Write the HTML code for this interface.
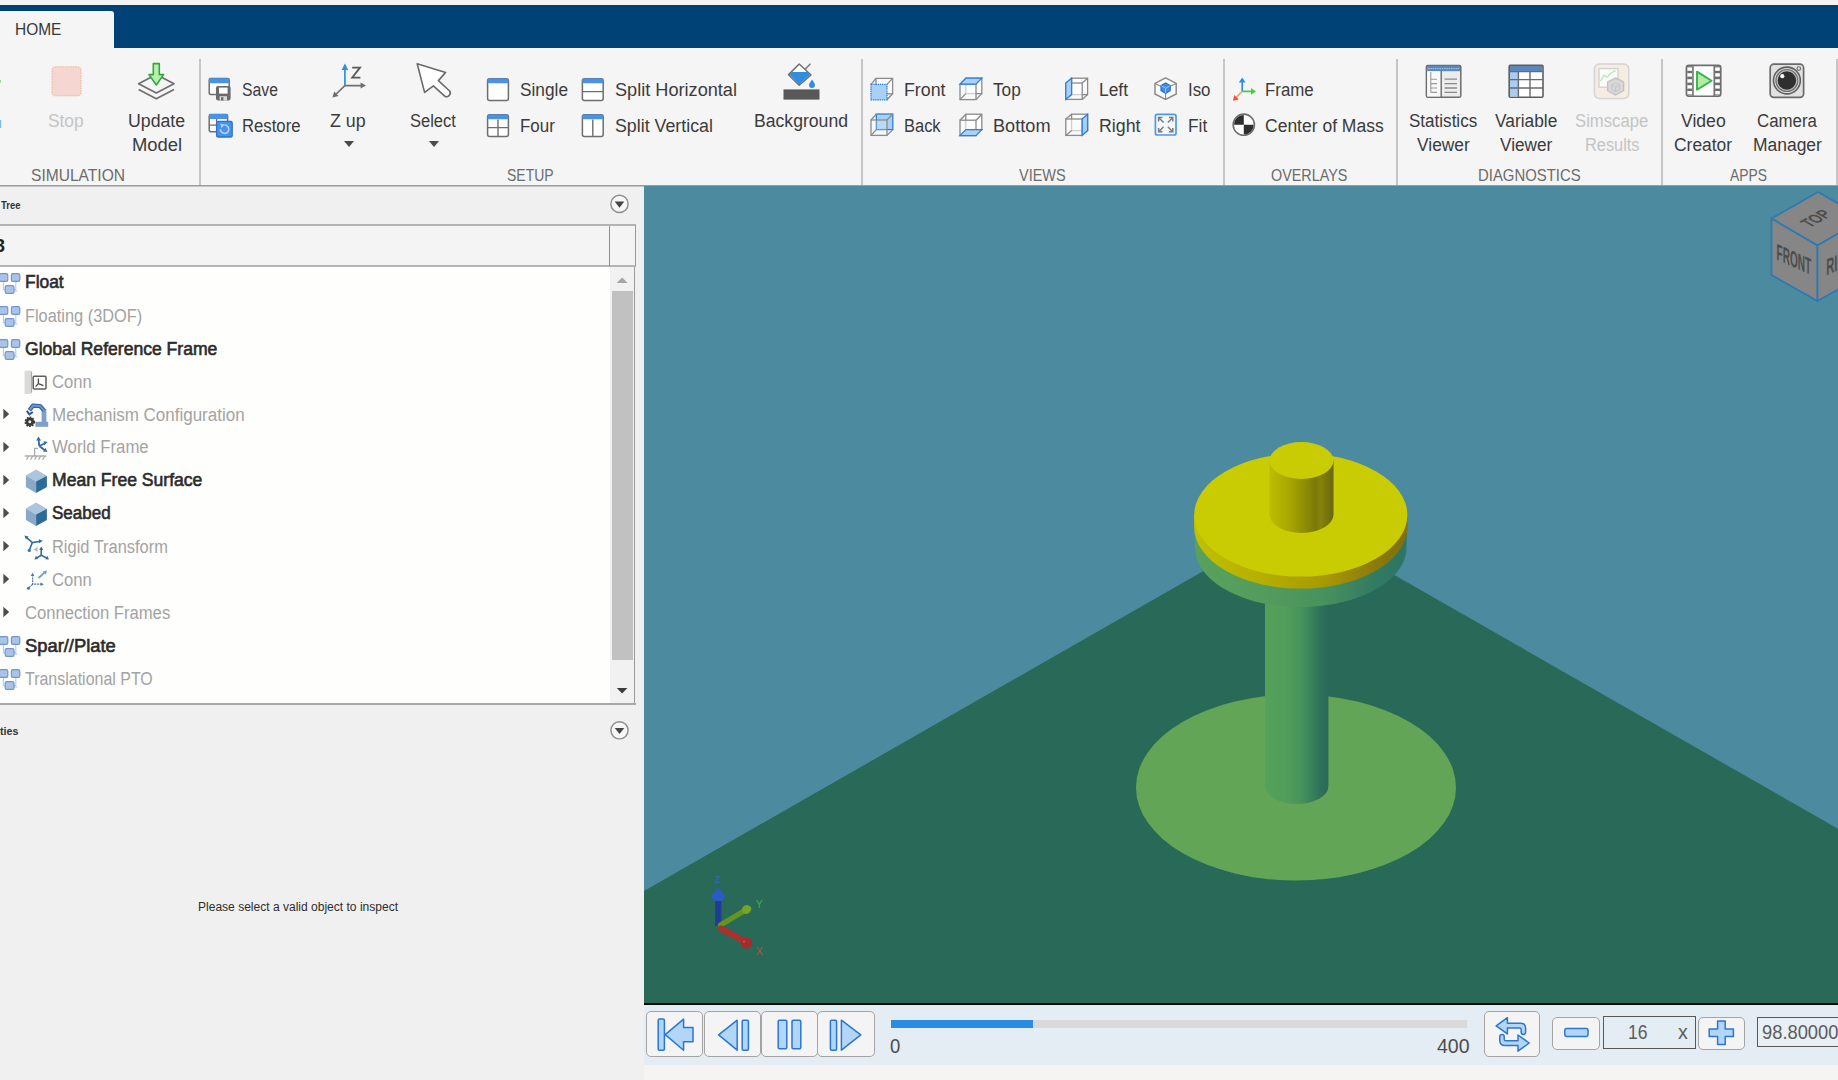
<!DOCTYPE html>
<html>
<head>
<meta charset="utf-8">
<title>Mechanics Explorer</title>
<style>
*{box-sizing:border-box;margin:0;padding:0}
html,body{width:1838px;height:1080px;overflow:hidden;background:#f0f0f0}
body{font-family:"Liberation Sans",sans-serif;position:relative;color:#3a3a3a}
.abs{position:absolute}
/* title / tab strip */
#topstrip{left:0;top:0;width:1838px;height:6px;background:#f3f3f3}
#bluebar{left:0;top:4.8px;width:1838px;height:42.8px;background:#004275}
#hometab{left:0;top:10.7px;width:113.5px;height:38px;background:#f5f5f5;border-radius:0 3px 0 0}
#hometab span{position:absolute;left:14.9px;top:8px;font-size:17px;line-height:22px;color:#383838;transform-origin:0 50%;transform:scaleX(0.9098)}
/* ribbon */
#ribbon{left:0;top:48px;width:1838px;height:137px;background:#f5f5f5}
#rline{left:0;top:185px;width:1838px;height:1px;background:#9c9c9c}
#rline2{left:0;top:186px;width:644px;height:1px;background:#c4c4c4}
.sep{position:absolute;top:59px;width:2px;height:126px;background:#c6c6c6}
.t{position:absolute;font-size:18px;line-height:22px;white-space:nowrap;color:#3b3b3b;transform-origin:0 50%}
.tc{position:absolute;font-size:18px;line-height:22px;white-space:nowrap;color:#3b3b3b;text-align:center;transform-origin:50% 50%}
.dis{color:#c4c4c4}
.sec{position:absolute;font-size:15.5px;line-height:18px;white-space:nowrap;color:#6a6a6a;text-align:center;top:166px;transform-origin:50% 50%}
.ic{position:absolute;overflow:visible}
/* left panel */
#left{left:0;top:187px;width:644px;height:893px;background:#f0f0f0}
#thead{left:-2px;top:224px;width:638px;height:43px;background:#f4f4f4;border:2px solid #b4b4b4;border-right:1px solid #9a9a9a}
#tvdiv{left:609px;top:226px;width:1px;height:40px;background:#8f8f8f}
#tree{left:0;top:267px;width:610px;height:436px;background:#fefefc}
#tscroll{left:610px;top:267px;width:25px;height:436px;background:#f1f1f1;border-right:1px solid #9a9a9a}
#tthumb{left:612px;top:291px;width:21px;height:369px;background:#c1c1c1}
#tbottom{left:0;top:703px;width:636px;height:2px;background:#a9a9a9}
.row{position:absolute;left:0;height:33px;width:610px}
.row .lbl{position:absolute;top:5px;font-size:18px;line-height:22px;white-space:nowrap;transform-origin:0 50%}
.b{font-weight:bold;color:#2a2a2a}
.g{color:#a0a0a0}
.tri{position:absolute;left:3px;width:0;height:0;border-left:6px solid #4d4d4d;border-top:5.5px solid transparent;border-bottom:5.5px solid transparent}
/* viewport */
#view{left:644px;top:186px;width:1194px;height:817px;background:#4b8a9f;overflow:hidden}
#vline{left:644px;top:1002.7px;width:1194px;height:2.6px;background:#050505}
/* playback */
#play{left:644px;top:1005px;width:1194px;height:60px;background:#e3edf3}
#bstrip{left:644px;top:1065px;width:1194px;height:15px;background:#f5f4f3}
.pbtn{position:absolute;background:#f4f4f4;border:1.8px solid #a4a4a4;border-radius:5px}
</style>
</head>
<body>
<div id="topstrip" class="abs"></div>
<div id="bluebar" class="abs"></div>
<div id="hometab" class="abs"><span>HOME</span></div>
<div id="ribbon" class="abs"></div><div id="rline" class="abs"></div><div id="rline2" class="abs"></div>
<!--RIBBON_START-->
<div class="sep" style="left:199px"></div>
<div class="sep" style="left:861px"></div>
<div class="sep" style="left:1222.5px"></div>
<div class="sep" style="left:1395.5px"></div>
<div class="sep" style="left:1660.5px"></div>
<div class="sep" style="left:1835.5px"></div>
<span class="t dis" style="left:48.0px;top:109.7px;font-size:18px;transform:scaleX(0.9614)">Stop</span>
<span class="t " style="left:128.1px;top:109.7px;font-size:18px;transform:scaleX(0.9837)">Update</span>
<span class="t " style="left:131.6px;top:133.9px;font-size:18px;transform:scaleX(1.0239)">Model</span>
<span class="t " style="left:242.0px;top:78.8px;font-size:18px;transform:scaleX(0.8750)">Save</span>
<span class="t " style="left:242.0px;top:114.5px;font-size:18px;transform:scaleX(0.9281)">Restore</span>
<span class="t " style="left:330.0px;top:109.7px;font-size:18px;transform:scaleX(0.9883)">Z up</span>
<span class="t " style="left:410.2px;top:109.7px;font-size:18px;transform:scaleX(0.9174)">Select</span>
<span class="t " style="left:519.5px;top:78.8px;font-size:18px;transform:scaleX(0.9592)">Single</span>
<span class="t " style="left:519.5px;top:114.5px;font-size:18px;transform:scaleX(0.9402)">Four</span>
<span class="t " style="left:614.6px;top:78.8px;font-size:18px;transform:scaleX(1.0077)">Split Horizontal</span>
<span class="t " style="left:614.6px;top:114.5px;font-size:18px;transform:scaleX(0.9883)">Split Vertical</span>
<span class="t " style="left:754.3px;top:109.7px;font-size:18px;transform:scaleX(0.9785)">Background</span>
<span class="t " style="left:903.8px;top:78.8px;font-size:18px;transform:scaleX(0.9877)">Front</span>
<span class="t " style="left:903.8px;top:114.5px;font-size:18px;transform:scaleX(0.9146)">Back</span>
<span class="t " style="left:993.2px;top:78.8px;font-size:18px;transform:scaleX(0.9578)">Top</span>
<span class="t " style="left:993.2px;top:114.5px;font-size:18px;transform:scaleX(1.0083)">Bottom</span>
<span class="t " style="left:1099.0px;top:78.8px;font-size:18px;transform:scaleX(0.9658)">Left</span>
<span class="t " style="left:1099.0px;top:114.5px;font-size:18px;transform:scaleX(0.9875)">Right</span>
<span class="t " style="left:1187.8px;top:78.8px;font-size:18px;transform:scaleX(0.9370)">Iso</span>
<span class="t " style="left:1187.8px;top:114.5px;font-size:18px;transform:scaleX(0.9601)">Fit</span>
<span class="t " style="left:1265.4px;top:78.8px;font-size:18px;transform:scaleX(0.9364)">Frame</span>
<span class="t " style="left:1265.4px;top:114.5px;font-size:18px;transform:scaleX(0.9725)">Center of Mass</span>
<span class="t " style="left:1409.0px;top:109.7px;font-size:18px;transform:scaleX(0.9469)">Statistics</span>
<span class="t " style="left:1416.7px;top:133.9px;font-size:18px;transform:scaleX(0.9653)">Viewer</span>
<span class="t " style="left:1495.0px;top:109.7px;font-size:18px;transform:scaleX(0.9627)">Variable</span>
<span class="t " style="left:1500.0px;top:133.9px;font-size:18px;transform:scaleX(0.9543)">Viewer</span>
<span class="t dis" style="left:1575.4px;top:109.7px;font-size:18px;transform:scaleX(0.9274)">Simscape</span>
<span class="t dis" style="left:1584.8px;top:133.9px;font-size:18px;transform:scaleX(0.9079)">Results</span>
<span class="t " style="left:1680.7px;top:109.7px;font-size:18px;transform:scaleX(0.9778)">Video</span>
<span class="t " style="left:1674.0px;top:133.9px;font-size:18px;transform:scaleX(0.9679)">Creator</span>
<span class="t " style="left:1757.0px;top:109.7px;font-size:18px;transform:scaleX(0.9356)">Camera</span>
<span class="t " style="left:1753.0px;top:133.9px;font-size:18px;transform:scaleX(0.9698)">Manager</span>
<span class="t " style="left:31.3px;top:163.8px;font-size:16.5px;transform:scaleX(0.9436);color:#6b6b6b">SIMULATION</span>
<span class="t " style="left:507.0px;top:163.8px;font-size:16.5px;transform:scaleX(0.8471);color:#6b6b6b">SETUP</span>
<span class="t " style="left:1018.7px;top:163.8px;font-size:16.5px;transform:scaleX(0.8782);color:#6b6b6b">VIEWS</span>
<span class="t " style="left:1271.4px;top:163.8px;font-size:16.5px;transform:scaleX(0.8708);color:#6b6b6b">OVERLAYS</span>
<span class="t " style="left:1477.9px;top:163.8px;font-size:16.5px;transform:scaleX(0.9025);color:#6b6b6b">DIAGNOSTICS</span>
<span class="t " style="left:1730.1px;top:163.8px;font-size:16.5px;transform:scaleX(0.8405);color:#6b6b6b">APPS</span>
<div class="abs" style="left:343.7px;top:141px;width:0;height:0;border-left:5.5px solid transparent;border-right:5.5px solid transparent;border-top:6px solid #4a4a4a"></div>
<div class="abs" style="left:428.7px;top:141px;width:0;height:0;border-left:5.5px solid transparent;border-right:5.5px solid transparent;border-top:6px solid #4a4a4a"></div>
<!--RIBBON_END-->
<!--RICONS_START-->
<svg class="abs" style="left:0;top:47px" width="1838" height="139" viewBox="0 47 1838 139" fill="none">
<!-- clipped run button remnants at far left -->
<rect x="-1" y="80" width="2" height="2.6" fill="#8fda98"/><rect x="-1" y="120" width="2.2" height="8" fill="#7dbcf0"/>
<!-- Stop (disabled) -->
<rect x="52" y="66.8" width="29" height="29" rx="3.2" fill="#f5d6d1" stroke="#eab695" stroke-width="1" stroke-dasharray="1.5 1"/>
<!-- Update Model -->
<g stroke="#6f6f6f" stroke-width="1.7" stroke-linejoin="round">
<path d="M138.6,89.4 L156.3,98.8 L174,89.4"/>
<path d="M156.3,74.4 L174,83.7 L156.3,93 L138.6,83.7 Z" fill="#f5f5f5"/>
</g>
<path d="M153.3,63.6 H159.3 V74.6 H163.6 L156.3,85 L149,74.6 H153.3 Z" fill="#b9efab" stroke="#2eaa3c" stroke-width="1.6" stroke-linejoin="round"/>
<!-- Save -->
<rect x="209.2" y="78.6" width="20" height="16" rx="1.5" fill="#fff" stroke="#6e6e6e" stroke-width="1.5"/>
<rect x="209.2" y="78.2" width="20" height="5" rx="1" fill="#4a92e6"/>
<rect x="216" y="86" width="14.6" height="14.4" rx="1.8" fill="#6b6b6b"/>
<rect x="219" y="87.6" width="8.6" height="6" fill="#fdfdfd"/>
<rect x="219.6" y="96.2" width="7.4" height="4.2" fill="#d8d8d8"/><rect x="221" y="97.2" width="2.4" height="3.2" fill="#6b6b6b"/>
<!-- Restore -->
<rect x="209.2" y="114.4" width="18.4" height="17.4" rx="1.5" fill="#fff" stroke="#6e6e6e" stroke-width="1.5"/>
<rect x="209.2" y="114" width="18.4" height="5" rx="1" fill="#4a92e6"/>
<path d="M209.2,125.2 H227.6 M216.6,119 V131.8" stroke="#6e6e6e" stroke-width="1.3"/>
<rect x="216.6" y="121.4" width="15.6" height="15.6" rx="1.6" fill="#4a92e6" stroke="#2c72cf" stroke-width="1.3"/>
<path d="M220.4,129.2 A4.2,4.2 0 1 0 224.4,125" stroke="#a9d0f7" stroke-width="1.6"/>
<path d="M220.2,123.6 L224.8,124.6 L221.6,128 Z" fill="#a9d0f7"/>
<!-- Z up -->
<path d="M344.9,85.6 V69" stroke="#2e8ee2" stroke-width="1.7"/>
<path d="M344.9,63.4 L348.2,70 H341.6 Z" fill="#2e8ee2"/>
<path d="M344.9,85.6 H362 M344.9,85.6 L335.4,94.8" stroke="#6f6f6f" stroke-width="1.6"/>
<path d="M366,85.6 L360.6,82.6 V88.6 Z M332.4,97.6 L334.2,91.6 L338.6,96 Z" fill="#6f6f6f"/>
<path d="M352.2,67.6 H360 L352.2,77.6 H360.4" stroke="#5a5a5a" stroke-width="1.8" stroke-linejoin="miter"/>
<!-- Select -->
<path d="M417.2,63.8 L445.6,72.4 L438.4,80.6 L449.6,91 Q451.4,93.4 449,95.6 Q446.6,97.8 444.4,95.8 L433.4,85.8 L424.6,92.4 Z" fill="#fff" stroke="#6a6a6a" stroke-width="1.6" stroke-linejoin="round"/>
<!-- layout icons -->
<g stroke="#6e6e6e" stroke-width="1.5">
<rect x="487.6" y="78.8" width="20.8" height="21.6" rx="2" fill="#fff"/>
<rect x="487.6" y="114.8" width="20.8" height="21.6" rx="2" fill="#fff"/>
<rect x="582.4" y="78.8" width="20.8" height="21.6" rx="2" fill="#fff"/>
<rect x="582.4" y="114.8" width="20.8" height="21.6" rx="2" fill="#fff"/>
<path d="M487.6,127.6 H508.4 M498,119.6 V136.4 M582.4,91.6 H603.2 M592.8,119.6 V136.4" stroke-width="1.4"/>
</g>
<g fill="#4a92e6">
<rect x="487.6" y="78.4" width="20.8" height="4.8" rx="1.2"/><rect x="487.6" y="114.4" width="20.8" height="4.8" rx="1.2"/>
<rect x="582.4" y="78.4" width="20.8" height="4.8" rx="1.2"/><rect x="582.4" y="114.4" width="20.8" height="4.8" rx="1.2"/>
</g>
<!-- Background -->
<rect x="783.5" y="89.4" width="36" height="10.2" fill="#585858"/>
<path d="M805,69.6 L810.4,63.8" stroke="#7a7a7a" stroke-width="1.5"/>
<path d="M799.2,64 L811,75 L799.2,85.2 L788.6,74.6 Z" fill="#fff" stroke="#6e6e6e" stroke-width="1.5" stroke-linejoin="round"/>
<path d="M791.8,72 H807.8 L810,75 L799.2,84.4 L789.6,74.6 Z" fill="#2e8ee2"/>
<path d="M812,79.4 C813.6,82 815,83.4 815,85 A3,3 0 0 1 809,85 C809,83.4 810.4,82 812,79.4 Z" fill="#2e8ee2"/>
<!-- view cubes -->
<g stroke="#8a8a8a" stroke-width="1.3">
<!-- Front -->
<rect x="876" y="78.4" width="16.6" height="15.4" fill="#fdfdfd"/><path d="M871,84.4 L876,78.4 M887,84.4 L892.6,78.4 M887,99.8 L892.6,93.8"/>
<rect x="871" y="84.4" width="16" height="15.4" fill="#a9d1f6" stroke="#2f7fd8" stroke-dasharray="1.4 0.8"/>
<!-- Back -->
<rect x="876.4" y="114" width="16.4" height="15.6" fill="#a9d1f6" stroke="#2f7fd8"/>
<rect x="871" y="120" width="16" height="15.4" fill="#fdfdfd" fill-opacity="0.2"/><path d="M871,120 L876.4,114 M887,120 L892.8,114 M887,135.4 L892.8,129.6 M871,135.4 L876.4,129.6"/>
<!-- Top -->
<rect x="965.8" y="78.2" width="16" height="15.4" fill="#fdfdfd"/><rect x="960" y="84.2" width="16" height="15.4" fill="#fdfdfd" fill-opacity="0.6"/>
<path d="M976,99.6 L981.8,93.6 M960,99.6 L965.8,93.6"/>
<path d="M965.8,78.2 H981.8 L976,84.2 H960 Z" fill="#a9d1f6" stroke="#2f7fd8"/>
<!-- Bottom -->
<rect x="965.8" y="114.2" width="16" height="15.4" fill="#fdfdfd"/><rect x="960" y="120.2" width="16" height="15.4" fill="#fdfdfd" fill-opacity="0.6"/>
<path d="M960,120.2 L965.8,114.2 M976,120.2 L981.8,114.2"/>
<path d="M965.8,129.6 H981.8 L976,135.6 H960 Z" fill="#a9d1f6" stroke="#2f7fd8"/>
<!-- Left -->
<rect x="1071.6" y="78.2" width="16" height="16.4" fill="#fdfdfd"/><rect x="1065.8" y="83" width="16.4" height="16.4" fill="#fdfdfd" fill-opacity="0.6"/>
<path d="M1082.2,83 L1087.6,78.2 M1082.2,99.4 L1087.6,94.6"/>
<path d="M1065.8,83 L1071.6,78.2 V94.6 L1065.8,99.4 Z" fill="#a9d1f6" stroke="#2f7fd8"/>
<!-- Right -->
<rect x="1071.6" y="114.2" width="16" height="16.4" fill="#fdfdfd"/><rect x="1065.8" y="119" width="16.4" height="16.4" fill="#fdfdfd" fill-opacity="0.6"/>
<path d="M1065.8,119 L1071.6,114.2 M1065.8,135.4 L1071.6,130.6"/>
<path d="M1082.2,119 L1087.6,114.2 V130.6 L1082.2,135.4 Z" fill="#a9d1f6" stroke="#2f7fd8"/>
<!-- Iso -->
<path d="M1165.6,77.8 L1176.2,83.4 V94 L1165.6,99.4 L1155,94 V83.4 Z" fill="#fdfdfd" stroke-width="1.5"/>
<path d="M1165.6,99.4 V92 M1155,83.4 L1161.2,86.4 M1176.2,83.4 L1170,86.4" stroke-width="1.1"/>
</g>
<path d="M1165.6,83 L1170.2,85.6 V90.6 L1165.6,93.2 L1161,90.6 V85.6 Z" fill="#3f8fe6" stroke="#2a6fd0" stroke-width="1.2"/>
<path d="M1165.6,88.2 V93 M1165.6,88.2 L1161.2,85.8 M1165.6,88.2 L1170,85.8" stroke="#9cc8f5" stroke-width="0.9"/>
<!-- Fit -->
<rect x="1155.4" y="114.4" width="20.6" height="20.6" rx="2" fill="#f4f8fd" stroke="#4a9aea" stroke-width="1.7"/>
<g stroke="#7a7a7a" stroke-width="1.4">
<path d="M1163.6,122.6 L1159,118 M1167.8,122.6 L1172.4,118 M1163.6,126.8 L1159,131.4 M1167.8,126.8 L1172.4,131.4"/>
<path d="M1158.6,121.4 V117.6 H1162.4 M1169,117.6 H1172.8 V121.4 M1158.6,128 V131.8 H1162.4 M1169,131.8 H1172.8 V128" stroke-width="1.5"/>
</g>
<!-- Frame -->
<path d="M1242.2,91.4 V81.6" stroke="#2e8ee2" stroke-width="1.7"/><path d="M1242.2,77.6 L1245.6,82.6 H1238.8 Z" fill="#2e8ee2"/>
<path d="M1242.2,91.4 H1252" stroke="#40d040" stroke-width="1.7"/><path d="M1256,91.4 L1251,88 V94.8 Z" fill="#40d040"/>
<path d="M1242.2,91.4 L1236,97.6" stroke="#e9aa7c" stroke-width="1.9"/><path d="M1233,100.8 L1234.2,95 L1238.8,99.6 Z" fill="#ff4a3c"/>
<!-- Center of Mass -->
<circle cx="1243.8" cy="124.7" r="10.6" fill="#fff" stroke="#6e6e6e" stroke-width="1.6"/>
<path d="M1243.8,124.7 V114.9 A9.8,9.8 0 0 0 1234,124.7 Z M1243.8,124.7 V134.5 A9.8,9.8 0 0 0 1253.6,124.7 Z" fill="#2e2e2e"/>
<!-- Statistics Viewer -->
<rect x="1426.4" y="65.4" width="34.4" height="31.8" rx="1.4" fill="#ececec" stroke="#6c6c6c" stroke-width="1.5"/>
<rect x="1427.2" y="66" width="32.8" height="5.2" fill="#5b88bc"/><path d="M1428,68.6 H1459" stroke="#a8c6e6" stroke-width="1" stroke-dasharray="1.5 0.8"/>
<rect x="1427.2" y="71.4" width="13.6" height="25" fill="#f9f9f9"/>
<path d="M1441.2,71 V97" stroke="#6c6c6c" stroke-width="1.4"/>
<path d="M1430.8,72 V92.6 M1430.8,79.2 H1437 M1430.8,83.6 H1437 M1430.8,88 H1437 M1430.8,92.4 H1437" stroke="#9a9a9a" stroke-width="1.1"/>
<path d="M1444.6,79.2 H1457 M1444.6,83.6 H1457 M1444.6,88 H1457 M1444.6,92.4 H1457" stroke="#8a8a8a" stroke-width="1.3"/>
<!-- Variable Viewer -->
<rect x="1509.2" y="65.4" width="33.8" height="31.8" rx="1" fill="#fff" stroke="#5e5e5e" stroke-width="1.6"/>
<rect x="1510" y="66" width="32.2" height="5.2" fill="#5b88bc"/>
<rect x="1510" y="72" width="8" height="24.4" fill="#a9cdf0"/>
<path d="M1509.2,71.6 H1543 M1509.2,79.6 H1543 M1509.2,88 H1543 M1518.4,71.6 V97 M1530,71.6 V97" stroke="#6a6a6a" stroke-width="1.4"/>
<!-- Simscape Results (disabled) -->
<rect x="1594.4" y="64" width="34.4" height="34.4" rx="5" fill="#f5ece2" stroke="#d4d4d4" stroke-width="1.5"/>
<rect x="1599" y="68.6" width="19" height="18.6" fill="#fbfbfb" stroke="#d0d0d0" stroke-width="1.3"/>
<path d="M1600.4,81 L1604,75.4 L1607.4,77 L1611,73 L1615.6,70.6" stroke="#b4e8b0" stroke-width="1.3"/>
<path d="M1615.6,78 L1623.6,82 V90.6 L1615.6,95 L1607.6,90.6 V82 Z" fill="#d9d9d9" stroke="#c2c2c2" stroke-width="1.4"/>
<path d="M1615.6,83 L1619.6,85.2 V89.4 L1615.6,91.6 L1611.6,89.4 V85.2 Z M1615.6,87.2 V91.6 M1615.6,87.2 L1611.8,85.2 M1615.6,87.2 L1619.4,85.2" stroke="#c4c4c4" stroke-width="1"/>
<!-- Video Creator -->
<rect x="1686.4" y="65.4" width="34.4" height="30.8" rx="2.4" fill="#fff" stroke="#6e6e6e" stroke-width="1.6"/>
<path d="M1693,65.4 V96.2 M1714.2,65.4 V96.2" stroke="#6e6e6e" stroke-width="1.5"/>
<rect x="1687.2" y="66.2" width="5" height="29.2" fill="#6e6e6e"/><rect x="1715" y="66.2" width="5" height="29.2" fill="#6e6e6e"/>
<g fill="#fff">
<rect x="1687.4" y="67.4" width="4.6" height="3.4"/><rect x="1687.4" y="73.2" width="4.6" height="3.4"/><rect x="1687.4" y="79.2" width="4.6" height="3.4"/><rect x="1687.4" y="85.2" width="4.6" height="3.4"/><rect x="1687.4" y="91" width="4.6" height="3.4"/>
<rect x="1715.2" y="67.4" width="4.6" height="3.4"/><rect x="1715.2" y="73.2" width="4.6" height="3.4"/><rect x="1715.2" y="79.2" width="4.6" height="3.4"/><rect x="1715.2" y="85.2" width="4.6" height="3.4"/><rect x="1715.2" y="91" width="4.6" height="3.4"/>
</g>
<path d="M1697,71.6 L1711.6,80.7 L1697,89.8 Z" fill="#b2ebA4" stroke="#38b24a" stroke-width="1.9" stroke-linejoin="round"/>
<!-- Camera Manager -->
<rect x="1770.2" y="64.2" width="33.4" height="33.2" rx="3.6" fill="#e1e1e1" stroke="#6a6a6a" stroke-width="1.7"/>
<circle cx="1786.9" cy="80.5" r="13.4" fill="#dcdcdc" stroke="#5e5e5e" stroke-width="1.6"/>
<circle cx="1786.9" cy="80.5" r="11" fill="#bdbdbd" stroke="#6f6f6f" stroke-width="1.2"/>
<circle cx="1786.9" cy="80.5" r="9.2" fill="#2f2f2f"/>
<circle cx="1782.3" cy="76.2" r="2.1" fill="#fafafa"/>
<circle cx="1798.8" cy="68.6" r="1.8" fill="#e1e1e1" stroke="#6a6a6a" stroke-width="1.1"/>
</svg>
<!--RICONS_END-->
<div id="left" class="abs"></div>
<!--LEFT_START-->
<div id="thead" class="abs"></div><div id="tvdiv" class="abs"></div>
<div id="tree" class="abs"></div><div id="tscroll" class="abs"></div><div id="tthumb" class="abs"></div><div id="tbottom" class="abs"></div>
<span class="t" style="left:0.6px;top:197.8px;font-size:10.5px;line-height:14px;transform:scaleX(0.9074);color:#333;font-weight:bold">Tree</span>
<span class="t" style="left:-0.4px;top:723.8px;font-size:11px;line-height:14px;transform:scaleX(0.9707);color:#333;font-weight:bold">ties</span>
<div class="abs" style="left:0;top:232px;width:8px;height:26px;overflow:hidden"><span style="position:absolute;left:-5.6px;top:2px;font-size:19px;line-height:24px;font-weight:bold;color:#222">3</span></div>
<span class="t" style="left:25.4px;top:271.4px;font-size:18px;line-height:22px;transform:scaleX(0.9670);color:#2b2b2b;-webkit-text-stroke:0.6px #2b2b2b">Float</span>
<span class="t" style="left:25.1px;top:304.6px;font-size:18px;line-height:22px;transform:scaleX(0.9082);color:#a3a3a3">Floating (3DOF)</span>
<span class="t" style="left:25.4px;top:337.5px;font-size:18px;line-height:22px;transform:scaleX(0.9761);color:#2b2b2b;-webkit-text-stroke:0.6px #2b2b2b">Global Reference Frame</span>
<span class="t" style="left:51.8px;top:370.7px;font-size:18px;line-height:22px;transform:scaleX(0.9225);color:#a3a3a3">Conn</span>
<span class="t" style="left:51.8px;top:403.6px;font-size:18px;line-height:22px;transform:scaleX(0.9436);color:#a3a3a3">Mechanism Configuration</span>
<span class="t" style="left:51.8px;top:436.0px;font-size:18px;line-height:22px;transform:scaleX(0.9326);color:#a3a3a3">World Frame</span>
<span class="t" style="left:52.0px;top:469.4px;font-size:18px;line-height:22px;transform:scaleX(0.9761);color:#2b2b2b;-webkit-text-stroke:0.6px #2b2b2b">Mean Free Surface</span>
<span class="t" style="left:52.0px;top:502.3px;font-size:18px;line-height:22px;transform:scaleX(0.9442);color:#2b2b2b;-webkit-text-stroke:0.6px #2b2b2b">Seabed</span>
<span class="t" style="left:51.8px;top:535.5px;font-size:18px;line-height:22px;transform:scaleX(0.9122);color:#a3a3a3">Rigid Transform</span>
<span class="t" style="left:51.8px;top:568.7px;font-size:18px;line-height:22px;transform:scaleX(0.9225);color:#a3a3a3">Conn</span>
<span class="t" style="left:24.6px;top:601.6px;font-size:18px;line-height:22px;transform:scaleX(0.9244);color:#a3a3a3">Connection Frames</span>
<span class="t" style="left:24.9px;top:634.7px;font-size:18px;line-height:22px;transform:scaleX(1.0196);color:#2b2b2b;-webkit-text-stroke:0.6px #2b2b2b">Spar//Plate</span>
<span class="t" style="left:25.1px;top:667.7px;font-size:18px;line-height:22px;transform:scaleX(0.8870);color:#a3a3a3">Translational PTO</span>
<span class="t" style="left:197.5px;top:899.4px;font-size:12.5px;line-height:16px;transform:scaleX(0.9627);color:#2d2d2d">Please select a valid object to inspect</span>
<svg class="abs" style="left:0;top:186px" width="644" height="560" viewBox="0 186 644 560" fill="none">
<circle cx="619.5" cy="203.9" r="8.6" fill="#f6f6f6" stroke="#8c8c8c" stroke-width="1.4"/><path d="M614.7,201.5 H624.3 L619.5,207.70000000000002 Z" fill="#454545"/>
<circle cx="619.5" cy="730.3" r="8.6" fill="#f6f6f6" stroke="#8c8c8c" stroke-width="1.4"/><path d="M614.7,727.9 H624.3 L619.5,734.0999999999999 Z" fill="#454545"/>
<path d="M3.4,408.7 L9.2,414 L3.4,419.3 Z" fill="#4c4c4c"/>
<path d="M3.4,441.7 L9.2,447 L3.4,452.3 Z" fill="#4c4c4c"/>
<path d="M3.4,474.7 L9.2,480 L3.4,485.3 Z" fill="#4c4c4c"/>
<path d="M3.4,507.7 L9.2,513 L3.4,518.3 Z" fill="#4c4c4c"/>
<path d="M3.4,540.7 L9.2,546 L3.4,551.3 Z" fill="#4c4c4c"/>
<path d="M3.4,573.7 L9.2,579 L3.4,584.3 Z" fill="#4c4c4c"/>
<path d="M3.4,606.7 L9.2,612 L3.4,617.3 Z" fill="#4c4c4c"/>
<path d="M616.6,283 H627.6 L622.1,277.4 Z" fill="#a6a6a6"/><path d="M616.8,688 H627.4 L622.1,693.6 Z" fill="#3c3c3c"/>
<g transform="translate(0,0)"><path d="M3.4,281.6 V289.6 H5 M15.8,281.6 V289.6 H14 M14.2,291 H17.6" stroke="#b5cbe8" stroke-width="1.1"/><rect x="-0.8" y="273.6" width="8.6" height="7.8" rx="1.6" fill="#aac3e6" stroke="#7096cc" stroke-width="1.2"/><rect x="11.4" y="273.6" width="8.4" height="7.8" rx="1.6" fill="#aac3e6" stroke="#7096cc" stroke-width="1.2"/><rect x="5.2" y="285.6" width="8.8" height="7.8" rx="1.6" fill="#aac3e6" stroke="#7096cc" stroke-width="1.2"/></g>
<g transform="translate(0,33)"><path d="M3.4,281.6 V289.6 H5 M15.8,281.6 V289.6 H14 M14.2,291 H17.6" stroke="#b5cbe8" stroke-width="1.1"/><rect x="-0.8" y="273.6" width="8.6" height="7.8" rx="1.6" fill="#aac3e6" stroke="#7096cc" stroke-width="1.2"/><rect x="11.4" y="273.6" width="8.4" height="7.8" rx="1.6" fill="#aac3e6" stroke="#7096cc" stroke-width="1.2"/><rect x="5.2" y="285.6" width="8.8" height="7.8" rx="1.6" fill="#aac3e6" stroke="#7096cc" stroke-width="1.2"/></g>
<g transform="translate(0,66)"><path d="M3.4,281.6 V289.6 H5 M15.8,281.6 V289.6 H14 M14.2,291 H17.6" stroke="#b5cbe8" stroke-width="1.1"/><rect x="-0.8" y="273.6" width="8.6" height="7.8" rx="1.6" fill="#aac3e6" stroke="#7096cc" stroke-width="1.2"/><rect x="11.4" y="273.6" width="8.4" height="7.8" rx="1.6" fill="#aac3e6" stroke="#7096cc" stroke-width="1.2"/><rect x="5.2" y="285.6" width="8.8" height="7.8" rx="1.6" fill="#aac3e6" stroke="#7096cc" stroke-width="1.2"/></g>
<g transform="translate(0,363)"><path d="M3.4,281.6 V289.6 H5 M15.8,281.6 V289.6 H14 M14.2,291 H17.6" stroke="#b5cbe8" stroke-width="1.1"/><rect x="-0.8" y="273.6" width="8.6" height="7.8" rx="1.6" fill="#aac3e6" stroke="#7096cc" stroke-width="1.2"/><rect x="11.4" y="273.6" width="8.4" height="7.8" rx="1.6" fill="#aac3e6" stroke="#7096cc" stroke-width="1.2"/><rect x="5.2" y="285.6" width="8.8" height="7.8" rx="1.6" fill="#aac3e6" stroke="#7096cc" stroke-width="1.2"/></g>
<g transform="translate(0,396)"><path d="M3.4,281.6 V289.6 H5 M15.8,281.6 V289.6 H14 M14.2,291 H17.6" stroke="#b5cbe8" stroke-width="1.1"/><rect x="-0.8" y="273.6" width="8.6" height="7.8" rx="1.6" fill="#aac3e6" stroke="#7096cc" stroke-width="1.2"/><rect x="11.4" y="273.6" width="8.4" height="7.8" rx="1.6" fill="#aac3e6" stroke="#7096cc" stroke-width="1.2"/><rect x="5.2" y="285.6" width="8.8" height="7.8" rx="1.6" fill="#aac3e6" stroke="#7096cc" stroke-width="1.2"/></g>
<rect x="24.6" y="370.6" width="6.6" height="23.4" fill="#dadada"/><path d="M31.6,371.6 V392.6" stroke="#8fa6c8" stroke-width="1"/><rect x="33.2" y="376.2" width="12.8" height="12.8" rx="1" fill="#fdfdfd" stroke="#5e5e5e" stroke-width="1.5"/><path d="M38.4,378.4 V383.6 L35.6,386.6 M38.4,383.6 L43.4,385.6" stroke="#4a4a4a" stroke-width="1.3"/>
<rect x="35.4" y="421.8" width="12.8" height="5" fill="#7d9fcb"/><rect x="41.6" y="409" width="4.8" height="13.4" fill="#7d9fcb"/><path d="M44.2,410.6 L40,406 L33,405.6 L29.4,410.2" stroke="#3566a2" stroke-width="4.2" stroke-linejoin="round"/><path d="M44.2,410.6 L40,406 L33,405.6 L30,409.6" stroke="#6f95c6" stroke-width="1.8" stroke-linejoin="round"/><path d="M26.8,410.8 L29.4,414.4 L32.8,412" stroke="#2a5794" stroke-width="2"/><circle cx="29.8" cy="421.8" r="4.3" fill="#3a3a3a" stroke="#3a3a3a" stroke-width="2" stroke-dasharray="1.6 1.2"/><circle cx="29.8" cy="421.8" r="1.5" fill="#e8e8e8"/>
<path d="M24.8,456 H46.4" stroke="#9c9c9c" stroke-width="1.2"/><path d="M26.6,459.6 L28.8,456 M30.6,459.6 L32.8,456 M34.6,459.6 L36.8,456 M38.6,459.6 L40.8,456 M42.6,459.6 L44.8,456" stroke="#a8a8a8" stroke-width="1.2"/><path d="M34.6,456 V448.4 H38" stroke="#a8a8a8" stroke-width="1.2"/><path d="M39.2,446 L38.6,439 M39.2,446 L45.6,443 M39.2,446 L45.2,450.4" stroke="#2f6fa8" stroke-width="1.9"/><path d="M38.5,436.6 L41,440.4 L36.2,440.6 Z M47.8,442 L44.2,445.2 L43.6,441.2 Z M47.4,452 L43,451.4 L45.6,448 Z" fill="#2f6fa8"/>
<g transform="translate(0,0.0)"><path d="M36.1,469.4 L46.9,475.8 L36.1,481.6 L25.9,475.6 Z" fill="#abc5dd"/><path d="M25.9,475.6 L36.1,481.6 V493 L25.9,487 Z" fill="#89a9ca"/><path d="M36.1,481.6 L46.9,475.8 V487 L36.1,493 Z" fill="#2d6a95"/></g>
<g transform="translate(0,33.0)"><path d="M36.1,469.4 L46.9,475.8 L36.1,481.6 L25.9,475.6 Z" fill="#abc5dd"/><path d="M25.9,475.6 L36.1,481.6 V493 L25.9,487 Z" fill="#89a9ca"/><path d="M36.1,481.6 L46.9,475.8 V487 L36.1,493 Z" fill="#2d6a95"/></g>
<path d="M25.6,536.6 L32.3,542.6 L41,541.2 M32.3,542.6 L29.4,550" stroke="#2f6f9f" stroke-width="1.6"/><path d="M24.4,535.4 L28.6,536.4 L26,539.4 Z M42.8,540.8 L39.2,543.2 L38.8,539.2 Z" fill="#2f6f9f"/><circle cx="29.3" cy="550.4" r="1.7" fill="#3f78b0"/><path d="M41.2,555.2 V548.6 M41.2,555.2 L36,558.4 M41.2,555.2 L47.4,558.4" stroke="#2f6f9f" stroke-width="1.6"/><path d="M41.2,546.6 L43.2,550 H39.2 Z M34.4,559.4 L36,555.8 L38,559 Z M49,559.4 L45.4,559.2 L47.2,555.8 Z" fill="#2f6f9f"/><path d="M33.6,549.4 L37.6,546.8 V552 Z" fill="#b8b8b8"/>
<path d="M32.6,574.6 V584.2 H41.6 M32.6,584.2 L28.8,587.8" stroke="#4a78a8" stroke-width="1.2" stroke-dasharray="2 0.8"/><path d="M32.6,572.8 L34.4,576 H30.8 Z M43.8,584.2 L40.6,586 V582.4 Z" fill="#4a78a8"/><circle cx="28.4" cy="588.2" r="1.5" fill="#4a78a8"/><path d="M38.6,578 L45,572.2" stroke="#6a9fd2" stroke-width="1.8"/><path d="M47,570.4 L46,574.6 L42.8,571.4 Z" fill="#6a9fd2"/>
</svg>
<!--LEFT_END-->
<div id="view" class="abs">
<!--SCENE_START-->
<svg class="abs" style="left:0;top:0" width="1194" height="817" viewBox="644 186 1194 817">
<defs>
<linearGradient id="gcol" x1="0" x2="1" y1="0" y2="0">
<stop offset="0" stop-color="#54a15a"/><stop offset="0.3" stop-color="#529e5a"/><stop offset="0.55" stop-color="#48955b"/><stop offset="0.72" stop-color="#3a835c"/><stop offset="0.88" stop-color="#2e705a"/><stop offset="1" stop-color="#2a6a58"/>
</linearGradient>
<linearGradient id="gbowl" x1="0" x2="1" y1="0" y2="0">
<stop offset="0" stop-color="#58a25c"/><stop offset="0.3" stop-color="#559c5c"/><stop offset="0.6" stop-color="#48925e"/><stop offset="0.85" stop-color="#327a62"/><stop offset="1" stop-color="#2d7565"/>
</linearGradient>
<linearGradient id="grim" x1="0" x2="1" y1="0" y2="0">
<stop offset="0" stop-color="#c2c000"/><stop offset="0.35" stop-color="#b4ac00"/><stop offset="0.6" stop-color="#a89a00"/><stop offset="0.85" stop-color="#8c7a0c"/><stop offset="1" stop-color="#80700f"/>
</linearGradient>
<linearGradient id="gcyl" x1="0" x2="1" y1="0" y2="0">
<stop offset="0" stop-color="#bdbd00"/><stop offset="0.3" stop-color="#a9a800"/><stop offset="0.55" stop-color="#8f8d04"/><stop offset="0.72" stop-color="#7c790a"/><stop offset="0.8" stop-color="#86830a"/><stop offset="1" stop-color="#6a660e"/>
</linearGradient>
</defs>
<!-- seabed plane -->
<polygon points="644,891 1295.4,518.4 1838,828.8 1838,1004 644,1004" fill="#286a57"/>
<!-- plate -->
<ellipse cx="1296" cy="787.5" rx="160" ry="93" fill="#63a556"/>
<!-- spar column -->
<path d="M1265,590 L1265,786 A31.7,18 0 0 0 1328.4,786 L1328.4,590 Z" fill="url(#gcol)"/>
<!-- float bowl (submerged part) -->
<path d="M1194.2,523 L1195.4,552 C1198,580 1240,607 1300,607 C1360,607 1403,580 1406.2,552 L1407.4,523 Z" fill="url(#gbowl)"/>
<!-- float rim -->
<ellipse cx="1300.8" cy="527" rx="106.6" ry="61.6" fill="url(#grim)"/>
<rect x="1194.2" y="515" width="213.2" height="12" fill="url(#grim)"/>
<!-- float top -->
<ellipse cx="1300.8" cy="515" rx="106.6" ry="61.6" fill="#c9cb03"/>
<!-- small cylinder -->
<path d="M1269.5,460.5 L1269.5,514.5 A32,18.5 0 0 0 1333.5,514.5 L1333.5,460.5 Z" fill="url(#gcyl)"/>
<ellipse cx="1301.5" cy="460.5" rx="32" ry="18.5" fill="#c9cb03"/>
<!-- axis triad -->
<g stroke-linecap="round">
<line x1="718.3" y1="926" x2="718.3" y2="894" stroke="#1f3d94" stroke-width="6.2" stroke-linecap="butt"/>
<path d="M711,896 L718.3,888 L725.6,896 L722,901 L714.6,901 Z" fill="#2b5cc6"/>
<line x1="720.5" y1="925" x2="744" y2="911" stroke="#66951f" stroke-width="5.2"/>
<ellipse cx="746.5" cy="909.5" rx="5" ry="4.2" fill="#74a524" transform="rotate(-30 746.5 909.5)"/>
<line x1="721" y1="928.5" x2="744" y2="941" stroke="#ab3030" stroke-width="6.2"/>
<circle cx="746.5" cy="943" r="5.6" fill="#a82b2b"/>
<circle cx="744" cy="941.5" r="1" fill="#e85050"/>
</g>
<text x="714.8" y="882.5" font-family="Liberation Sans, sans-serif" font-size="12" fill="#2c69bd">z</text>
<text x="755.8" y="908" font-family="Liberation Sans, sans-serif" font-size="10.5" fill="#44ad3c">Y</text>
<text x="755.8" y="955" font-family="Liberation Sans, sans-serif" font-size="10.5" fill="#b3553c">X</text>
<!-- view cube -->
<g stroke="#2b7ab4" stroke-width="1.7" stroke-linejoin="round" fill="#868686">
<polygon points="1818,192 1771.5,218.6 1817.5,245.5 1864,218.6"/>
<polygon points="1771.5,218.6 1771.5,275 1817.5,301 1817.5,245.5"/>
<polygon points="1817.5,245.5 1817.5,301 1864,275 1864,218.6"/>
</g>
<g font-family="Liberation Sans, sans-serif" font-weight="bold" fill="#4c4c4c">
<text transform="matrix(0.866,0.39,0,1,1776.5,259.5)" font-size="23" textLength="40" lengthAdjust="spacingAndGlyphs">FRONT</text>
<text transform="matrix(0.866,-0.39,0,1,1826.3,275.5)" font-size="23" textLength="40" lengthAdjust="spacingAndGlyphs">RIGHT</text>
<text transform="matrix(0.866,-0.5,0.866,0.5,1810,228)" font-size="18" textLength="26" lengthAdjust="spacingAndGlyphs">TOP</text>
</g>
</svg>
<!--SCENE_END-->
</div>
<div id="vline" class="abs"></div>
<div id="play" class="abs"></div><div id="bstrip" class="abs"></div>
<!--PLAY_START-->
<div class="pbtn" style="left:646.1px;top:1011.2px;width:57.1px;height:45.4px"></div>
<div class="pbtn" style="left:703.8px;top:1011.2px;width:56.9px;height:45.4px"></div>
<div class="pbtn" style="left:760.7px;top:1011.2px;width:56.9px;height:45.4px"></div>
<div class="pbtn" style="left:817.4px;top:1011.2px;width:57.2px;height:45.4px"></div>
<div class="pbtn" style="left:1484.2px;top:1011.2px;width:56.2px;height:45.4px"></div>
<div class="pbtn" style="left:1552.4px;top:1016.6px;width:47.6px;height:33px"></div>
<div class="pbtn" style="left:1698.2px;top:1016.6px;width:47.2px;height:33px"></div>
<div class="abs" style="left:891.4px;top:1020px;width:575.8px;height:8.2px;background:#d9d9d9"></div>
<div class="abs" style="left:891.4px;top:1020px;width:142px;height:8.2px;background:#2a8be2"></div>
<span class="t" style="left:889.9px;top:1034.1px;font-size:19.5px;line-height:24px;transform:scaleX(0.9497);color:#4c4c4c">0</span>
<span class="t" style="left:1436.8px;top:1034.1px;font-size:19.5px;line-height:24px;transform:scaleX(0.9989);color:#4c4c4c">400</span>
<div class="abs" style="left:1603.2px;top:1016.2px;width:92.4px;height:32.6px;border:1.7px solid #585858;background:#e4edf4"></div>
<span class="t" style="left:1627.8px;top:1020.1px;font-size:19.5px;line-height:24px;transform:scaleX(0.8990);color:#5c5c5c">16</span>
<span class="t" style="left:1677.5px;top:1020.1px;font-size:19.5px;line-height:24px;transform:scaleX(1.0051);color:#5c5c5c">x</span>
<div class="abs" style="left:1757.2px;top:1017.4px;width:100px;height:30px;border:1.7px solid #585858;background:#e8f0f6"></div>
<span class="t" style="left:1762.1px;top:1019.7px;font-size:19.5px;line-height:24px;transform:scaleX(0.9400);color:#5c5c5c">98.80000</span>
<svg class="abs" style="left:644px;top:1005px" width="1194" height="60" viewBox="644 1005 1194 60" fill="#b2d6f7" stroke="#2c76d0" stroke-width="1.5" stroke-linejoin="round">
<rect x="658.2" y="1019" width="6.2" height="31.2" rx="1.2"/>
<path d="M665.2,1034.6 L683.6,1019.2 V1027.6 H693 V1041.8 H683.6 V1050.2 Z"/>
<path d="M718.6,1034.8 L737.2,1020.2 V1050.2 Z"/><rect x="742.2" y="1020.2" width="6.2" height="30" rx="1.2"/>
<rect x="778.2" y="1020.2" width="8.6" height="28.6" rx="1.2"/><rect x="792" y="1020.2" width="8.8" height="28.6" rx="1.2"/>
<rect x="830.4" y="1020.2" width="6.2" height="30" rx="1.2"/><path d="M860.8,1034.8 L841.4,1020.2 V1050.2 Z"/>
<g transform="translate(0,1.3)"><path d="M1496.2,1024.6 L1507.4,1016.4 V1022 H1520.6 Q1525.6,1022 1525.6,1027 V1031 Q1525.6,1033.2 1523.4,1033.2 Q1521.2,1033.2 1521.2,1031 V1028.4 Q1521.2,1026.8 1519.6,1026.8 H1507.4 V1032.6 Z"/></g>
<g transform="translate(0,-0.8)"><path d="M1529.2,1043.8 L1518,1052 V1046.4 H1504.8 Q1499.8,1046.4 1499.8,1041.4 V1037.4 Q1499.8,1035.2 1502,1035.2 Q1504.2,1035.2 1504.2,1037.4 V1040 Q1504.2,1041.6 1505.8,1041.6 H1518 V1035.8 Z"/></g>
<rect x="1564.8" y="1028.6" width="23.2" height="7.8" rx="1.6"/>
<path d="M1717.6,1021 H1725.2 V1029 H1733.4 V1036.6 H1725.2 V1044.6 H1717.6 V1036.6 H1709.2 V1029 H1717.6 Z"/>
</svg>
<!--PLAY_END-->
</body>
</html>
